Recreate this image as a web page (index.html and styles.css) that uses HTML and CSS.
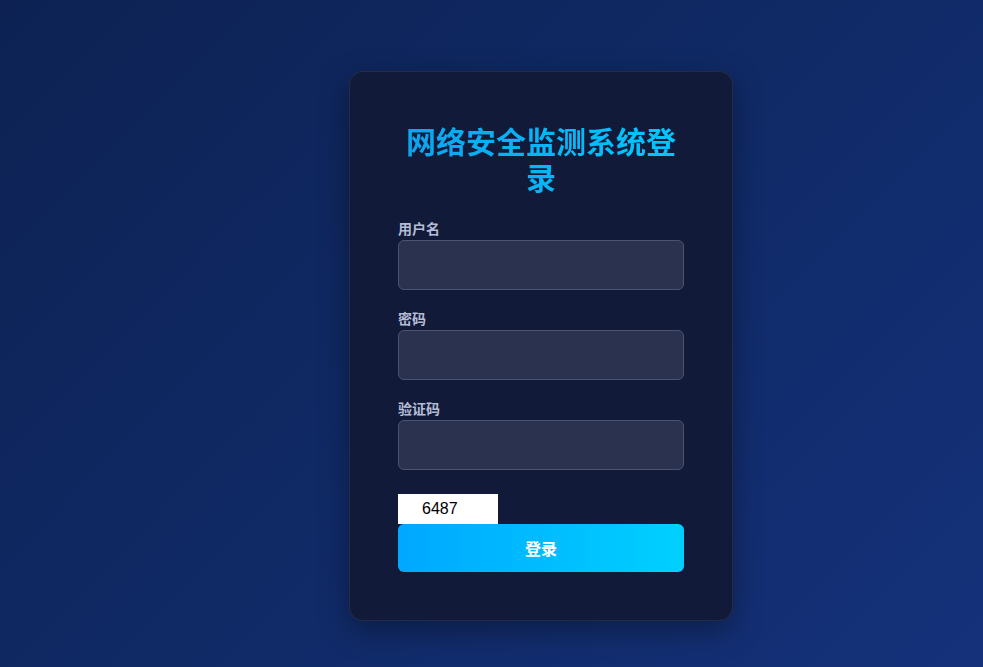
FILE: index.html
```html
<!DOCTYPE html>
<html lang="zh">
<head>
<meta charset="utf-8">
<title>网络安全监测系统登录</title>
<link rel="stylesheet" href="styles.css">
</head>
<body>
<main class="page">
  <section class="card">
    <h2 class="title">网络安全监测系统登录</h2>
    <form class="form">
      <div class="group">
        <label class="label">用户名</label>
        <input class="input" type="text">
      </div>
      <div class="group">
        <label class="label">密码</label>
        <input class="input" type="password">
      </div>
      <div class="group">
        <label class="label">验证码</label>
        <input class="input" type="text">
      </div>
      <div class="captcha"><span class="captcha-text">6487</span></div>
      <button class="btn" type="button">登录</button>
    </form>
  </section>
</main>
</body>
</html>
```
FILE: styles.css
```css
* { box-sizing: border-box; }
html, body { margin: 0; height: 100%; }
body {
  font-family: "Noto Sans CJK SC", "Noto Sans", sans-serif;
  background: linear-gradient(135deg, #0d2253 0%, #102a66 50%, #15317a 100%);
  overflow: hidden;
}
.page {
  display: flex;
  justify-content: center;
  padding: 71px 0 0 99px;
  min-height: 100%;
}
.card {
  width: 384px;
  height: 550px;
  padding: 48px;
  background: #111a38;
  border: 1px solid rgba(255,255,255,0.08);
  border-radius: 14px;
  box-shadow: 0 10px 30px rgba(0,0,0,0.35);
}
.title {
  margin: 0 0 24px;
  padding-top: 2px;
  font-size: 30px;
  font-weight: 700;
  text-align: center;
  line-height: 36px;
  background: linear-gradient(90deg, #0ea2ee, #00c8ff);
  -webkit-background-clip: text;
  background-clip: text;
  color: transparent;
}
.form { display: flex; flex-direction: column; }
.group { display: flex; flex-direction: column; margin-bottom: 18px; }
.label {
  font-size: 14px;
  font-weight: 600;
  color: #b4bdd6;
  line-height: 20px;
  margin-bottom: 2px;
}
.input {
  height: 50px;
  width: 100%;
  background: #2a3250;
  border: 1px solid #4a5470;
  border-radius: 6px;
  outline: none;
}
.captcha {
  margin-top: 6px;
  width: 100px;
  height: 30px;
  background: #fff;
  display: flex;
  align-items: center;
  padding-left: 24px;
}
.captcha-text {
  font-family: "Liberation Sans", Arial, sans-serif;
  font-size: 16px;
  color: #000;
}
.btn {
  height: 48px;
  width: 100%;
  border: none;
  border-radius: 6px;
  background: linear-gradient(90deg, #00a8ff, #00d0ff);
  color: #fff;
  font-family: "Noto Sans CJK SC", sans-serif;
  font-size: 16px;
  font-weight: 700;
}
```
